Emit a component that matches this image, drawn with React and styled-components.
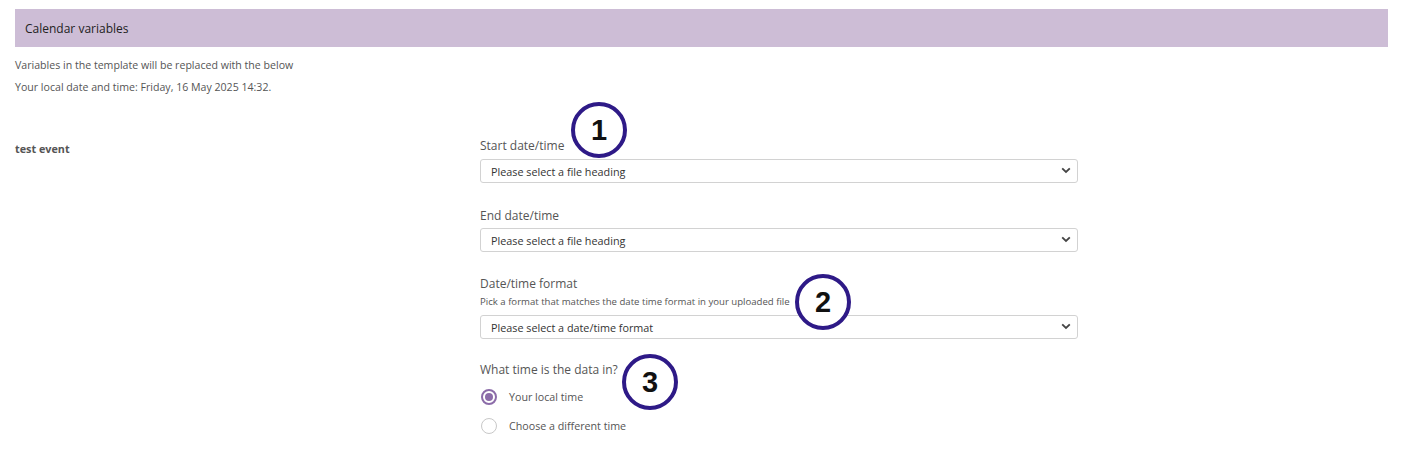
import React from "react";
import styled, { createGlobalStyle } from "styled-components";

const GlobalStyle = createGlobalStyle`
  body {
    margin: 0;
    background: #ffffff;
    font-family: "Open Sans", "Noto Sans", Arial, sans-serif;
  }
`;

const Page = styled.div`
  padding: 9px 14px 0 15px;
  color: #555;
`;

const Banner = styled.div`
  height: 38px;
  display: flex;
  align-items: center;
  padding-left: 10px;
  background-color: #cdbdd6;
  color: #222;
  font-size: 12px;
`;

const Intro = styled.div`
  font-size: 10.6px;
  line-height: 22px;
  margin-top: 7px;
`;

const EventRow = styled.div`
  display: flex;
  margin-top: 40px;
`;

const EventName = styled.div`
  width: 465px;
  padding-top: 3px;
  font-size: 10.8px;
  line-height: 16px;
  font-weight: 700;
  color: #555;
`;

const Fields = styled.div`
  width: 598px;
  display: flex;
  flex-direction: column;
`;

const Field = styled.div`
  position: relative;
  margin-top: ${(p) => p.$top || 0}px;
`;

const Label = styled.div`
  font-size: 12px;
  line-height: 16px;
  color: #555;
`;

const Hint = styled.div`
  margin-top: 3px;
  font-size: 9.6px;
  line-height: 14px;
  color: #555;
`;

const SelectWrap = styled.div`
  position: relative;
  margin-top: ${(p) => p.$top}px;
`;

const Select = styled.select`
  display: block;
  width: 100%;
  height: 24px;
  appearance: none;
  border: 1px solid #d2d2d2;
  border-radius: 3px;
  background: #fff;
  padding: 0 24px 0 10px;
  font-family: "Open Sans", "Noto Sans", Arial, sans-serif;
  font-size: 10.8px;
  color: #333;
  outline: none;
`;

const Chevron = styled.svg`
  position: absolute;
  right: 7px;
  top: 8px;
  pointer-events: none;
`;

const RadioRow = styled.label`
  display: flex;
  align-items: center;
  gap: 12px;
  height: 20px;
  margin-top: ${(p) => p.$top}px;
  font-size: 10.7px;
  color: #555;
`;

const RadioDot = styled.span`
  width: 16px;
  height: 16px;
  box-sizing: border-box;
  border-radius: 50%;
  border: ${(p) => (p.$checked ? "2px solid #8c6ca9" : "1.5px solid #c8c8c8")};
  display: flex;
  align-items: center;
  justify-content: center;
  margin-left: 1px;

  &::after {
    content: "";
    display: ${(p) => (p.$checked ? "block" : "none")};
    width: 8px;
    height: 8px;
    border-radius: 50%;
    background: #8c6ca9;
  }
`;

const Marker = styled.div`
  position: absolute;
  left: ${(p) => p.$x}px;
  top: ${(p) => p.$y}px;
  width: 56px;
  height: 56px;
  box-sizing: border-box;
  border: 4px solid #2e1a87;
  border-radius: 50%;
  background: #fff;
  display: flex;
  align-items: center;
  justify-content: center;
  font-family: "Liberation Sans", Arial, sans-serif;
  font-weight: 700;
  font-size: 29px;
  color: #111;
`;

const DropDown = ({ top, text }) => (
  <SelectWrap $top={top}>
    <Select defaultValue="">
      <option value="">{text}</option>
    </Select>
    <Chevron width="10" height="7" viewBox="0 0 10 7">
      <path d="M1.2 1.3 L5 5 L8.8 1.3" fill="none" stroke="#444" strokeWidth="1.8" />
    </Chevron>
  </SelectWrap>
);

export default function App() {
  return (
    <Page>
      <GlobalStyle />
      <Banner>Calendar variables</Banner>
      <Intro>
        <div>Variables in the template will be replaced with the below</div>
        <div>Your local date and time: Friday, 16 May 2025 14:32.</div>
      </Intro>
      <EventRow>
        <EventName>test event</EventName>
        <Fields>
          <Field>
            <Label>Start date/time</Label>
            <DropDown top={5} text="Please select a file heading" />
            <Marker $x={91} $y={-36}>1</Marker>
          </Field>
          <Field $top={25}>
            <Label>End date/time</Label>
            <DropDown top={4} text="Please select a file heading" />
          </Field>
          <Field $top={24}>
            <Label>Date/time format</Label>
            <Hint>Pick a format that matches the date time format in your uploaded file</Hint>
            <DropDown top={6} text="Please select a date/time format" />
            <Marker $x={315} $y={-2}>2</Marker>
          </Field>
          <Field $top={23}>
            <Label>What time is the data in?</Label>
            <RadioRow $top={9}>
              <RadioDot $checked />
              Your local time
            </RadioRow>
            <RadioRow $top={9}>
              <RadioDot />
              Choose a different time
            </RadioRow>
            <Marker $x={142} $y={-8}>3</Marker>
          </Field>
        </Fields>
      </EventRow>
    </Page>
  );
}
